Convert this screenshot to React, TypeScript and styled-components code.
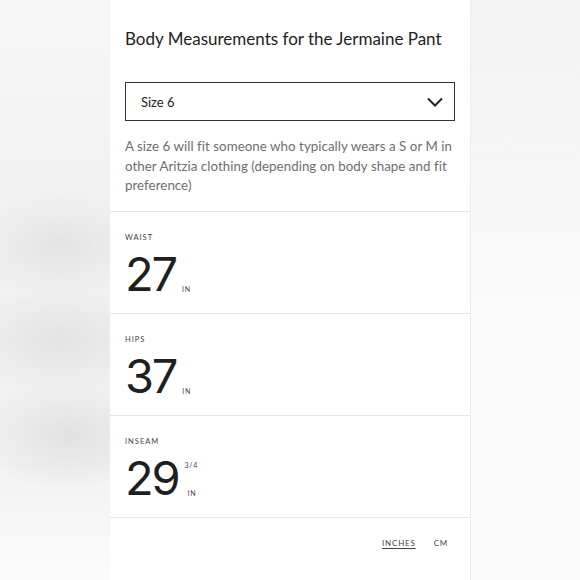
import styled, { createGlobalStyle } from 'styled-components';

const GlobalStyle = createGlobalStyle`
  html, body {
    margin: 0;
    padding: 0;
    background: #f6f6f6;
  }
  body {
    font-family: Lato, "Liberation Sans", sans-serif;
    color: #222;
  }
`;

const Page = styled.div`
  width: 580px;
  height: 580px;
  display: grid;
  grid-template-columns: 110px 360px 110px;
  overflow: hidden;
`;

const LeftBlur = styled.div`
  background:
    radial-gradient(ellipse 95px 55px at 60px 245px, #e3e3e3 0%, rgba(227, 227, 227, 0) 100%),
    radial-gradient(ellipse 95px 55px at 60px 340px, #e2e2e2 0%, rgba(226, 226, 226, 0) 100%),
    radial-gradient(ellipse 95px 55px at 70px 435px, #e1e1e1 0%, rgba(225, 225, 225, 0) 100%),
    linear-gradient(180deg, #f7f7f7 0%, #f2f2f2 30%, #f1f1f1 60%, #f2f2f2 80%, #fbfbfb 100%);
`;

const RightBlur = styled.div`
  border-left: 1px solid #ececec;
  background: linear-gradient(180deg, #f3f3f3 0%, #f6f6f6 30%, #fafafa 55%, #fbfbfb 100%);
`;

const Panel = styled.div`
  background: #fff;
  display: flex;
  flex-direction: column;
`;

const Header = styled.div`
  padding: 27px 15px 15px;
`;

const Title = styled.h1`
  margin: 0;
  font-size: 17px;
  font-weight: 400;
  line-height: 24px;
  color: #222;
`;

const Select = styled.div`
  margin-top: 31px;
  height: 37px;
  border: 1.5px solid #333;
  display: flex;
  align-items: center;
  justify-content: space-between;
  padding: 0 10px 0 15px;
  font-size: 13px;
  color: #222;
`;

const Note = styled.p`
  margin: 16px 0 0;
  font-size: 13.3px;
  line-height: 19.5px;
  letter-spacing: 0.05px;
  color: #6e6e6e;
`;

const Measure = styled.div`
  border-top: 1px solid #e6e6e6;
  height: 102px;
  box-sizing: border-box;
  padding: 21px 15px 0;
`;

const Label = styled.div`
  font-size: 7.5px;
  letter-spacing: 1px;
  color: #444;
  text-transform: uppercase;
`;

const ValueRow = styled.div`
  display: flex;
  align-items: flex-end;
  margin-top: 10px;
`;

const Big = styled.span`
  font-family: Inter, "Liberation Sans", sans-serif;
  font-size: 47px;
  line-height: 44px;
  letter-spacing: -2.2px;
  color: #1f1f1f;
`;

const Suffix = styled.div`
  display: flex;
  flex-direction: column;
  justify-content: space-between;
  height: 36px;
  margin-left: 6px;
  padding-bottom: 3px;
`;

const Small = styled.span<{ $indent?: number }>`
  font-size: 7px;
  letter-spacing: 0.8px;
  color: #444;
  margin-left: ${(p) => p.$indent || 0}px;
`;

const Units = styled.div`
  border-top: 1px solid #e6e6e6;
  display: flex;
  justify-content: flex-end;
  gap: 18px;
  padding: 20px 22px 0;
  flex: 1;
`;

const Unit = styled.span<{ $active?: boolean }>`
  font-size: 8px;
  letter-spacing: 0.8px;
  color: #444;
  text-decoration: ${(p) => (p.$active ? 'underline' : 'none')};
  text-underline-offset: 2px;
`;

const items = [
  { label: 'Waist', value: '27' },
  { label: 'Hips', value: '37' },
  { label: 'Inseam', value: '29', frac: '3/4' },
];

export default function App() {
  return (
    <>
      <GlobalStyle />
      <Page>
        <LeftBlur />
        <Panel>
          <Header>
            <Title>Body Measurements for the Jermaine Pant</Title>
            <Select>
              <span>Size 6</span>
              <svg width="18" height="12" viewBox="0 0 18 12" fill="none">
                <path d="M2 2.5 L9 9.5 L16 2.5" stroke="#222" strokeWidth="2" />
              </svg>
            </Select>
            <Note>
              A size 6 will fit someone who typically wears a S or M in other Aritzia clothing (depending on body shape
              and fit preference)
            </Note>
          </Header>
          {items.map((it) => (
            <Measure key={it.label}>
              <Label>{it.label}</Label>
              <ValueRow>
                <Big>{it.value}</Big>
                <Suffix>
                  <Small>{it.frac || ''}</Small>
                  <Small $indent={it.frac ? 3 : 0}>IN</Small>
                </Suffix>
              </ValueRow>
            </Measure>
          ))}
          <Units>
            <Unit $active>INCHES</Unit>
            <Unit>CM</Unit>
          </Units>
        </Panel>
        <RightBlur />
      </Page>
    </>
  );
}
